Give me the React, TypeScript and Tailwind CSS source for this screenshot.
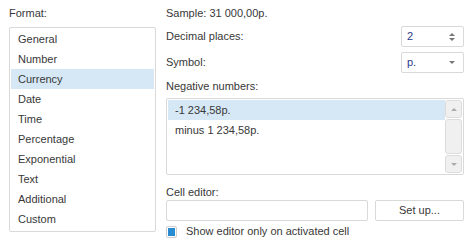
import { useState } from 'react';

const formats = ['General', 'Number', 'Currency', 'Date', 'Time', 'Percentage', 'Exponential', 'Text', 'Additional', 'Custom'];

function TriUp({ className }: { className: string }) {
  return (
    <svg width="6" height="3" viewBox="0 0 6 3" className={className}>
      <path d="M0 3 L3 0 L6 3 Z" fill="currentColor" />
    </svg>
  );
}

function TriDown({ className }: { className: string }) {
  return (
    <svg width="6" height="3" viewBox="0 0 6 3" className={className}>
      <path d="M0 0 L6 0 L3 3 Z" fill="currentColor" />
    </svg>
  );
}

export default function App() {
  const [format, setFormat] = useState('Currency');
  const [negative, setNegative] = useState(0);
  const [onlyActive, setOnlyActive] = useState(true);

  return (
    <div className="flex h-[245px] w-[473px] bg-white pl-[9px] pr-[9px] pt-[3px] text-[11px] text-[#383838] font-['Liberation_Sans',Arial,sans-serif]">
      {/* формат */}
      <div className="flex w-[147px] flex-col">
        <div className="leading-[20px]">Format:</div>
        <div className="mt-[4px] h-[205px] rounded-[2px] border border-[#d9d9d9] p-[1px]">
          {formats.map((f) => (
            <div
              key={f}
              onClick={() => setFormat(f)}
              className={`h-[20px] pl-[7px] leading-[20px] ${format === f ? 'bg-[#d6e8f5]' : ''}`}
            >
              {f}
            </div>
          ))}
        </div>
      </div>

      {/* настройки */}
      <div className="ml-[10px] flex flex-1 flex-col">
        <div className="leading-[20px]">Sample: 31 000,00p.</div>

        <div className="mt-[3px] flex h-[21px] items-center justify-between">
          <span>Decimal places:</span>
          <div className="flex h-[21px] w-[63px] items-center justify-between rounded-[2px] border border-[#d9d9d9] pl-[5px] pr-[8px]">
            <span className="text-[#2a3a8a]">2</span>
            <div className="flex flex-col gap-[2px]">
              <TriUp className="text-[#777]" />
              <TriDown className="text-[#777]" />
            </div>
          </div>
        </div>

        <div className="mt-[5px] flex h-[21px] items-center justify-between">
          <span>Symbol:</span>
          <div className="flex h-[21px] w-[63px] items-center justify-between rounded-[2px] border border-[#d9d9d9] pl-[5px] pr-[8px]">
            <span className="text-[#2a3a8a]">p.</span>
            <TriDown className="text-[#777]" />
          </div>
        </div>

        <div className="mt-[3px] leading-[20px]">Negative numbers:</div>
        <div className="mt-[2px] flex h-[77px] rounded-[2px] border border-[#d9d9d9] p-[1px]">
          <div className="flex-1">
            {['-1 234,58p.', 'minus 1 234,58p.'].map((t, i) => (
              <div
                key={t}
                onClick={() => setNegative(i)}
                className={`h-[20px] pl-[7px] leading-[20px] ${negative === i ? 'bg-[#d6e8f5]' : ''}`}
              >
                {t}
              </div>
            ))}
          </div>
          <div className="flex w-[17px] flex-col gap-[1px]">
            <div className="flex h-[18px] items-center justify-center rounded-[3px] border border-[#dcdcdc] bg-[#f0f0f0]">
              <TriUp className="text-[#aaa]" />
            </div>
            <div className="flex-1 rounded-[3px] border border-[#dcdcdc] bg-[#f0f0f0]" />
            <div className="flex h-[18px] items-center justify-center rounded-[3px] border border-[#dcdcdc] bg-[#f0f0f0]">
              <TriDown className="text-[#aaa]" />
            </div>
          </div>
        </div>

        <div className="mt-[10px] leading-[14px]">Cell editor:</div>
        <div className="mt-[1px] flex h-[21px] gap-[7px]">
          <div className="flex-1 rounded-[2px] border border-[#d9d9d9]" />
          <button className="w-[89px] rounded-[2px] border border-[#d9d9d9] bg-white text-[11px] text-[#383838]">
            Set up...
          </button>
        </div>

        <label className="mt-[4px] flex items-center gap-[9px]" onClick={() => setOnlyActive(!onlyActive)}>
          <span className="flex h-[12px] w-[11px] items-center justify-center rounded-[2px] border border-[#cfcfcf] bg-white">
            {onlyActive && <span className="h-[8px] w-[7px] bg-[#2a8ad2]" />}
          </span>
          <span className="leading-[13px]">Show editor only on activated cell</span>
        </label>
      </div>
    </div>
  );
}
